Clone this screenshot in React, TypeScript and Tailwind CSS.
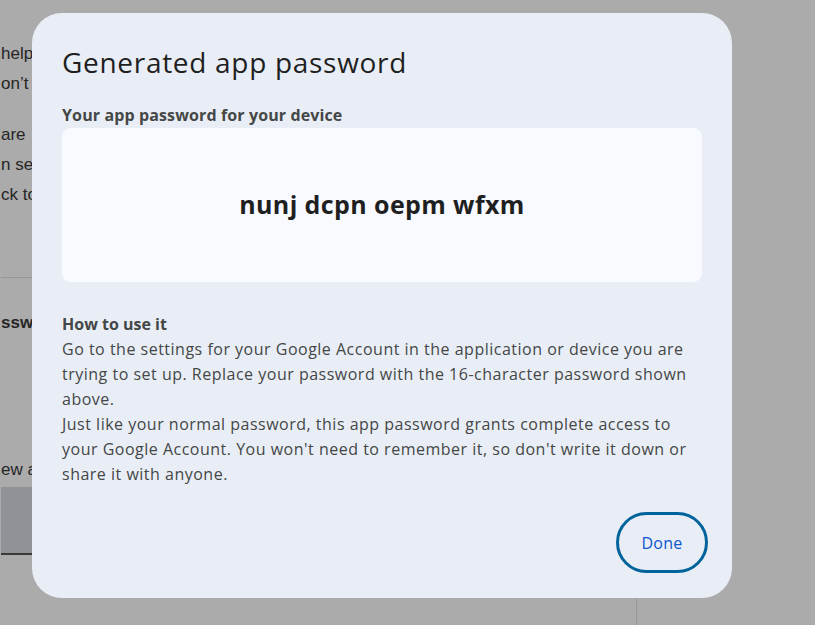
export default function App() {
  const bodyFont = { fontFamily: '"Open Sans", Roboto, sans-serif' }
  return (
    <div className="relative h-[625px] w-[815px] overflow-hidden bg-[#ababab] font-['Liberation_Sans',Arial,sans-serif] text-[#262626]">
      {/* page behind the scrim */}
      <div className="flex w-[640px] flex-col pl-[1px] text-[17px] leading-[30px]">
        <div className="pt-[39px]">help you</div>
        <div>on’t</div>
        <div className="pt-[21px]">are</div>
        <div>n see</div>
        <div>ck to</div>
        <div className="mt-[67px] border-t border-[#979797]" />
        <div className="pt-[30px] font-bold">ssword</div>
        <div className="pt-[117px]">ew app</div>
        <div className="mt-[2px] h-[68px] border-b-2 border-[#3a3a3a] bg-[#8f9297]" />
        <div className="ml-[635px] mt-[44px] h-[40px] border-l border-[#979797]" />
      </div>

      {/* dialog */}
      <div className="absolute left-[32px] top-[13px] flex h-[585px] w-[700px] flex-col rounded-[30px] bg-[#e9eef6] px-[30px]">
        <h1
          className="pt-[31px] text-[28px] leading-[36px] tracking-[0.7px] text-[#1f1f1f]"
          style={bodyFont}
        >
          Generated app password
        </h1>
        <div className="mt-[23px] text-[16px] font-bold leading-[24px] tracking-[0.12px] text-[#444746]" style={bodyFont}>
          Your app password for your device
        </div>
        <div className="mt-[1px] flex h-[154px] items-center justify-center rounded-[9px] bg-[#f8faff]">
          <span className="text-[25px] font-bold tracking-[0.4px] text-[#1f1f1f]" style={bodyFont}>
            nunj dcpn oepm wfxm
          </span>
        </div>
        <div className="mt-[30px] text-[16px] leading-[25px] tracking-[0.5px] text-[#444746]" style={bodyFont}>
          <div className="font-bold tracking-normal">How to use it</div>
          <div>
            Go to the settings for your Google Account in the application or device you are
            <br />
            trying to set up. Replace your password with the 16-character password shown
            <br />
            above.
          </div>
          <div>
            Just like your normal password, this app password grants complete access to
            <br />
            your Google Account. You won't need to remember it, so don't write it down or
            <br />
            share it with anyone.
          </div>
        </div>
        <div className="mr-[-6px] mt-[25px] flex justify-end">
          <button
            className="flex h-[61px] w-[92px] items-center justify-center rounded-full border-[3px] border-[#00639b] text-[16px] tracking-[0.3px] text-[#0b57d0]"
            style={bodyFont}
          >
            Done
          </button>
        </div>
      </div>
    </div>
  )
}
